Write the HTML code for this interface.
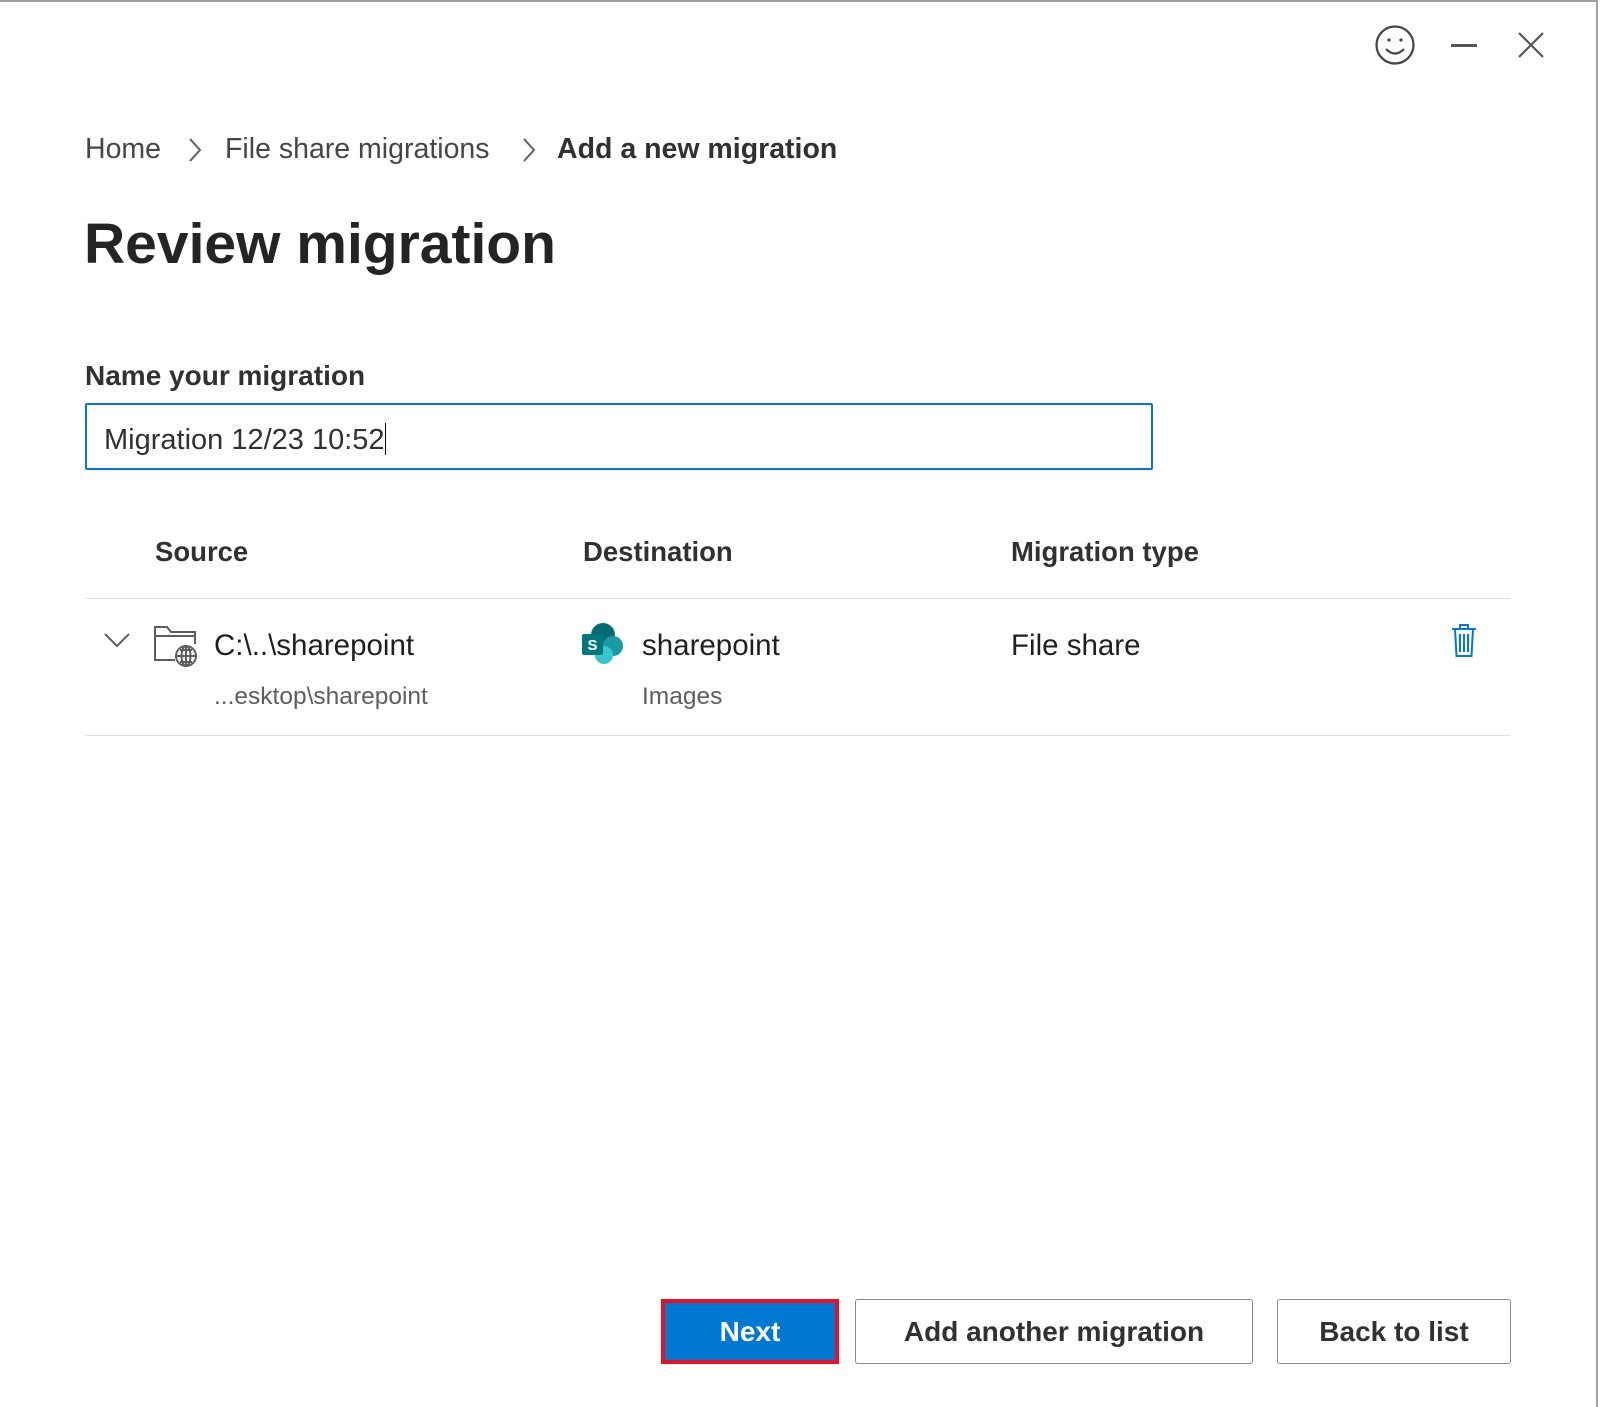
<!DOCTYPE html>
<html><head><meta charset="utf-8"><style>
*{margin:0;padding:0;box-sizing:border-box}
body{width:1600px;height:1407px;background:#fff;position:relative;overflow:hidden;font-family:"Liberation Sans",sans-serif;color:#201f1e}
.frame{position:absolute;left:0;top:0;width:1598px;height:1407px;border-top:2px solid #a0a0a0;border-right:2px solid #a0a0a0}
.a{position:absolute;white-space:nowrap}
.bc{top:133px;font-size:28.5px;color:#484644}
.hd{top:536px;font-size:27.5px;font-weight:bold;color:#323130}
.line{position:absolute;left:85px;width:1425px;height:1px;background:#e1dfdd}
.btn{position:absolute;top:1299px;height:65px;border:1px solid #8a8886;border-radius:3px;font-size:28px;font-weight:bold;color:#323130;display:flex;align-items:center;justify-content:center}
</style></head><body>
<div class="frame"></div>
<svg class="a" style="left:1374px;top:24px" width="42" height="42" viewBox="0 0 42 42" fill="none" stroke="#444" stroke-width="2.2"><circle cx="21" cy="21" r="18.5"/><circle cx="15" cy="16" r="1.6" fill="#444" stroke="none"/><circle cx="27" cy="16" r="1.6" fill="#444" stroke="none"/><path d="M12 25 Q21 34 30 25"/></svg>
<div class="a" style="left:1451px;top:44px;width:26px;height:2.5px;background:#555"></div>
<svg class="a" style="left:1518px;top:32px" width="26" height="26" viewBox="0 0 26 26" stroke="#555" stroke-width="2.2"><path d="M1 1L25 25M25 1L1 25"/></svg>

<div class="a bc" style="left:85px">Home</div>
<svg class="a" style="left:187px;top:136px" width="16" height="28" viewBox="0 0 16 28" fill="none" stroke="#605e5c" stroke-width="2"><path d="M3 3l10 11L3 25"/></svg>
<div class="a bc" style="left:225px">File share migrations</div>
<svg class="a" style="left:521px;top:136px" width="16" height="28" viewBox="0 0 16 28" fill="none" stroke="#605e5c" stroke-width="2"><path d="M3 3l10 11L3 25"/></svg>
<div class="a bc" style="left:557px;font-weight:bold;color:#323130">Add a new migration</div>

<div class="a" style="left:84px;top:211px;font-size:57px;font-weight:bold;color:#252423">Review migration</div>

<div class="a" style="left:85px;top:360px;font-size:28px;font-weight:bold;color:#323130">Name your migration</div>
<div class="a" style="left:85px;top:403px;width:1068px;height:67px;border:2px solid #0078d4;border-radius:2px"></div>
<div class="a" style="left:104px;top:423px;font-size:29px;color:#323130">Migration 12/23 10:52<span style="display:inline-block;width:1.5px;height:32px;background:#000;vertical-align:-6px"></span></div>

<div class="a hd" style="left:155px">Source</div>
<div class="a hd" style="left:583px">Destination</div>
<div class="a hd" style="left:1011px">Migration type</div>
<div class="line" style="top:598px"></div>
<div class="line" style="top:735px"></div>

<svg class="a" style="left:104px;top:632px" width="26" height="16" viewBox="0 0 26 16" fill="none" stroke="#605e5c" stroke-width="2"><path d="M1 2l12 12L25 2"/></svg>
<svg class="a" style="left:153px;top:624px" width="48" height="44" viewBox="0 0 48 44" fill="none" stroke="#605e5c" stroke-width="2"><path d="M22 36H2V3h12l4 5h24v12"/><path d="M2 12h40"/><circle cx="33" cy="32" r="10" fill="#fff"/><path d="M23 32h20M33 22v20M27 26h12M27 38h12"/><ellipse cx="33" cy="32" rx="4.5" ry="10"/></svg>
<div class="a" style="left:214px;top:629px;font-size:29.5px;color:#201f1e">C:\..\sharepoint</div>
<div class="a" style="left:214px;top:683px;font-size:24.5px;color:#605e5c">...esktop\sharepoint</div>

<svg class="a" style="left:581px;top:622px" width="46" height="44" viewBox="0 0 46 44"><circle cx="22" cy="13" r="12" fill="#036c70"/><circle cx="32" cy="24" r="10" fill="#1a9ba1"/><circle cx="23" cy="33" r="9" fill="#37c6d0"/><rect x="1" y="12" width="21" height="21" rx="2" fill="#03787c"/><text x="11.5" y="28" font-family="Liberation Sans" font-weight="bold" font-size="15" fill="#fff" text-anchor="middle">S</text></svg>
<div class="a" style="left:642px;top:629px;font-size:29.5px;color:#201f1e">sharepoint</div>
<div class="a" style="left:642px;top:683px;font-size:24.5px;color:#605e5c">Images</div>
<div class="a" style="left:1011px;top:629px;font-size:29.5px;color:#201f1e">File share</div>

<svg class="a" style="left:1450px;top:623px" width="28" height="36" viewBox="0 0 28 36" fill="none" stroke="#0078d4" stroke-width="2"><path d="M2 6h24M10 6V2h8v4M5 6l1.5 27h15L23 6M10 11v18M14 11v18M18 11v18"/></svg>

<div class="btn" style="left:661px;width:178px;background:#0078d4;color:#fff;border:4px solid #e81123;border-radius:0">Next</div>
<div class="btn" style="left:855px;width:398px">Add another migration</div>
<div class="btn" style="left:1277px;width:234px">Back to list</div>
</body></html>
